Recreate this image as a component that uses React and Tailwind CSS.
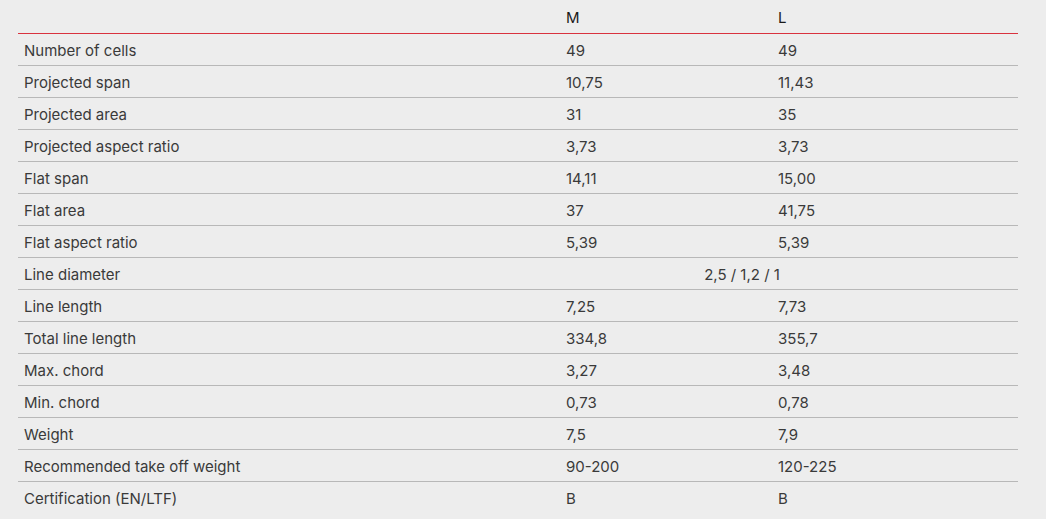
const rows = [
  ["Number of cells", "49", "49"],
  ["Projected span", "10,75", "11,43"],
  ["Projected area", "31", "35"],
  ["Projected aspect ratio", "3,73", "3,73"],
  ["Flat span", "14,11", "15,00"],
  ["Flat area", "37", "41,75"],
  ["Flat aspect ratio", "5,39", "5,39"],
  ["Line diameter", null, "2,5 / 1,2 / 1"],
  ["Line length", "7,25", "7,73"],
  ["Total line length", "334,8", "355,7"],
  ["Max. chord", "3,27", "3,48"],
  ["Min. chord", "0,73", "0,78"],
  ["Weight", "7,5", "7,9"],
  ["Recommended take off weight", "90-200", "120-225"],
  ["Certification (EN/LTF)", "B", "B"],
];

export default function App() {
  return (
    <div
      className="w-[1046px] h-[519px] bg-[#ededed] text-[#3a3a3a] text-[15px] pl-[18px]"
      style={{ fontFamily: "Inter, 'Liberation Sans', sans-serif" }}
    >
      <div className="w-[1000px]">
        <div className="grid grid-cols-[542px_212px_152px_94px] h-[34px] border-b border-[#d9333f] items-center pt-[3px]">
          <div />
          <div className="pl-[6px] text-[#1a1a1a]">M</div>
          <div className="pl-[6px] text-[#1a1a1a]">L</div>
          <div />
        </div>
        {rows.map((r, i) => (
          <div
            key={i}
            className={`grid grid-cols-[542px_212px_152px_94px] h-[32px] items-center pt-[3px] ${
              i < rows.length - 1 ? "border-b border-[#b8b8b8]" : ""
            }`}
          >
            <div className="pl-[6px]">{r[0]}</div>
            {r[1] === null ? (
              <div className="col-span-2 text-center">{r[2]}</div>
            ) : (
              <>
                <div className="pl-[6px]">{r[1]}</div>
                <div className="pl-[6px]">{r[2]}</div>
              </>
            )}
            <div />
          </div>
        ))}
      </div>
    </div>
  );
}
